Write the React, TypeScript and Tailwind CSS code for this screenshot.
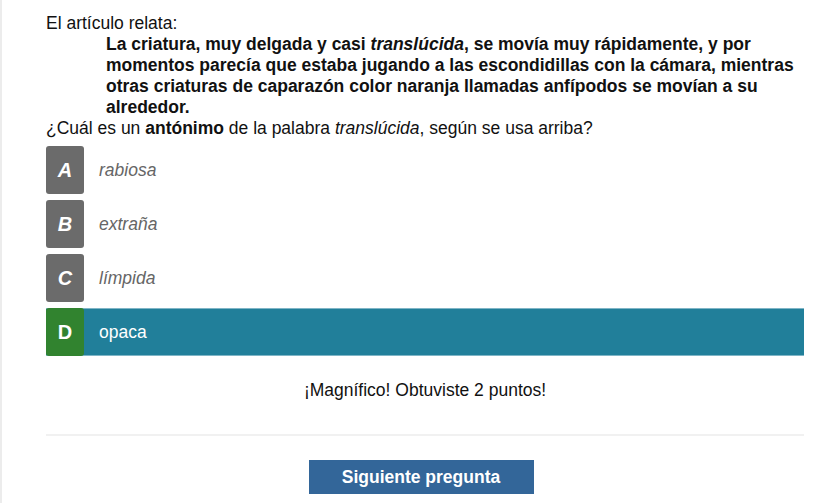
import React from 'react';

type Option = { letter: string; text: string; correct?: boolean };

const options: Option[] = [
  { letter: 'A', text: 'rabiosa' },
  { letter: 'B', text: 'extraña' },
  { letter: 'C', text: 'límpida' },
  { letter: 'D', text: 'opaca', correct: true },
];

const OptionRow: React.FC<{ option: Option }> = ({ option }) => {
  if (option.correct) {
    return (
      <div className="flex h-[48px] items-center bg-[#217f9a] border-y border-[#7fb5c6]">
        <div className="flex h-[48px] w-[38px] items-center justify-center rounded-[3px] bg-[#31832f] text-[20px] font-bold text-white">
          {option.letter}
        </div>
        <span className="ml-[15px] text-[17.5px] text-white">{option.text}</span>
      </div>
    );
  }

  return (
    <div className="flex h-[48px] items-center">
      <div className="flex h-[48px] w-[38px] items-center justify-center rounded-[3px] bg-[#6b6b6b] text-[20px] font-bold italic text-white">
        {option.letter}
      </div>
      <span className="ml-[15px] text-[17.5px] italic text-[#666]">{option.text}</span>
    </div>
  );
};

export default function App() {
  return (
    <div className="min-h-[503px] w-[817px] border-l-2 border-[#ececec] bg-white pl-[44px] pr-[13px] pt-[13px] font-['Liberation_Sans',Arial,sans-serif] text-[17.5px] leading-[21px] text-[#111]">
      <p>El artículo relata:</p>
      <p className="ml-[60px] font-bold">
        La criatura, muy delgada y casi <i>translúcida</i>, se movía muy rápidamente, y por momentos
        parecía que estaba jugando a las escondidillas con la cámara, mientras otras criaturas de
        caparazón color naranja llamadas anfípodos se movían a su alrededor.
      </p>
      <p>
        ¿Cuál es un <b>antónimo</b> de la palabra <i>translúcida</i>, según se usa arriba?
      </p>

      {/* Options */}
      <div className="mt-[7px] flex flex-col gap-[6px]">
        {options.map((o) => (
          <OptionRow key={o.letter} option={o} />
        ))}
      </div>

      {/* Feedback */}
      <p className="mt-[24px] text-center">¡Magnífico! Obtuviste 2 puntos!</p>

      <div className="mt-[33px] h-[2px] bg-[#f1f1f1]" />

      <div className="mt-[24px] flex justify-center pr-[8px]">
        <button className="h-[34px] w-[225px] bg-[#336699] text-[17.5px] font-bold text-white">
          Siguiente pregunta
        </button>
      </div>
    </div>
  );
}
